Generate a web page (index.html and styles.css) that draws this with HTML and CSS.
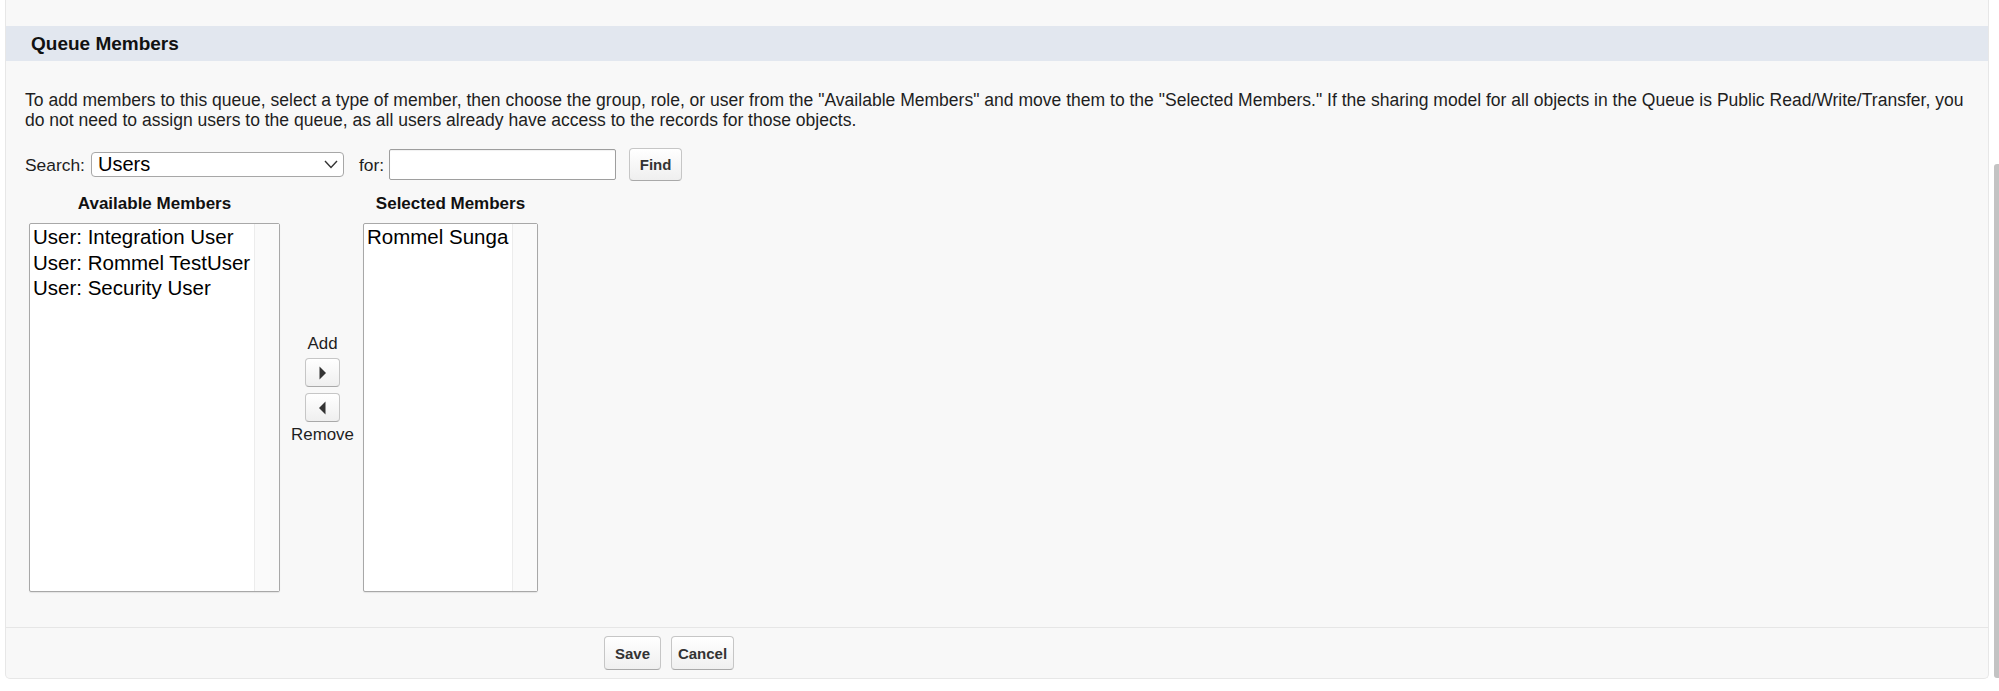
FILE: index.html
```
<!DOCTYPE html>
<html lang="en">
<head>
<meta charset="utf-8">
<title>Queue Members</title>
<link rel="stylesheet" href="styles.css">
</head>
<body>
<div class="panel">
  <div class="top-space"></div>
  <h3 class="subheader">Queue Members</h3>
  <div class="body">
    <p class="intro">To add members to this queue, select a type of member, then choose the group, role, or user from the "Available Members" and move them to the "Selected Members." If the sharing model for all objects in the Queue is Public Read/Write/Transfer, you do not need to assign users to the queue, as all users already have access to the records for those objects.</p>
    <div class="search-row">
      <span class="label">Search:</span>
      <div class="select">
        <span class="select-value">Users</span>
        <svg class="chevron" width="14" height="9" viewBox="0 0 14 9"><polyline points="1,1 7,7.5 13,1" fill="none" stroke="#333" stroke-width="1.4"/></svg>
      </div>
      <span class="label for-label">for:</span>
      <div class="text-input"></div>
      <button class="btn find-btn">Find</button>
    </div>
    <div class="duel">
      <div class="col-head">Available Members</div>
      <div class="col-head-spacer"></div>
      <div class="col-head">Selected Members</div>
      <div class="listbox list-left">
        <div class="options">
          <div class="option">User: Integration User</div>
          <div class="option">User: Rommel TestUser</div>
          <div class="option">User: Security User</div>
        </div>
        <div class="track"></div>
      </div>
      <div class="mover">
        <div class="mover-label">Add</div>
        <button class="btn arrow-btn add-btn"><svg width="9" height="14" viewBox="0 0 9 14"><polygon points="1.5,0.5 8,7 1.5,13.5" fill="#333"/></svg></button>
        <button class="btn arrow-btn remove-btn"><svg width="9" height="14" viewBox="0 0 9 14"><polygon points="7.5,0.5 1,7 7.5,13.5" fill="#333"/></svg></button>
        <div class="mover-label">Remove</div>
      </div>
      <div class="listbox list-right">
        <div class="options">
          <div class="option">Rommel Sunga</div>
        </div>
        <div class="track"></div>
      </div>
    </div>
  </div>
  <div class="footer">
    <button class="btn save-btn">Save</button>
    <button class="btn cancel-btn">Cancel</button>
  </div>
</div>
<div class="scroll-thumb"></div>
</body>
</html>
```
FILE: styles.css
```
* { box-sizing: border-box; }
html, body { margin: 0; padding: 0; }
body {
  background: #ffffff;
  font-family: "Liberation Sans", Arial, Helvetica, sans-serif;
  color: #1e1e1e;
  width: 1999px;
  height: 691px;
  overflow: hidden;
  position: relative;
}
.panel {
  margin-left: 5px;
  width: 1984px;
  background: #f8f8f8;
  border: 1px solid #e7e7e7;
  border-top: none;
  border-radius: 0 0 5px 5px;
}
.top-space { height: 26px; }
.subheader {
  margin: 0;
  height: 35px;
  line-height: 35px;
  background: #e2e7ef;
  padding-left: 25px;
  font-size: 19px;
  font-weight: bold;
  color: #111;
}
.body { padding: 0 12px 35px 19px; }
.intro {
  margin: 29px 0 0 0;
  font-size: 17.55px;
  line-height: 20px;
  color: #1e1e1e;
}
.search-row {
  margin-top: 18px;
  display: flex;
  align-items: center;
  height: 33px;
  font-size: 17.4px;
}
.label { line-height: 20px; }
.select {
  margin-left: 6px;
  width: 253px;
  height: 25px;
  background: #fff;
  border: 1px solid #a7a7a7;
  border-radius: 4px;
  display: flex;
  align-items: center;
  justify-content: space-between;
  padding: 0 5px 0 6px;
}
.select-value { font-size: 20px; color: #000; line-height: 23px; }
.chevron { display: block; }
.for-label { margin-left: 15px; }
.text-input {
  margin-left: 5px;
  width: 227px;
  height: 31px;
  background: #fff;
  border: 1px solid #9e9e9e;
  border-radius: 2px;
  box-shadow: inset 0 1px 1px rgba(0,0,0,0.06);
}
.btn {
  font-family: "Liberation Sans", Arial, Helvetica, sans-serif;
  font-weight: bold;
  font-size: 15px;
  color: #333;
  background: linear-gradient(#ffffff, #efefef);
  border: 1px solid #c6c6c6;
  border-bottom-color: #a9a9a9;
  border-radius: 4px;
  padding: 0;
  margin: 0;
  display: flex;
  align-items: center;
  justify-content: center;
}
.find-btn { margin-left: 13px; width: 53px; height: 33px; }
.duel {
  margin-top: 13px;
  margin-left: 4px;
  display: grid;
  grid-template-columns: 251px 83px 175px;
  grid-template-rows: 20px 369px;
  row-gap: 9px;
}
.col-head {
  text-align: center;
  font-weight: bold;
  font-size: 17px;
  line-height: 20px;
  color: #111;
}
.listbox {
  display: flex;
  background: #fff;
  border: 1px solid #a8a8a8;
  border-radius: 2px;
  box-shadow: 0 1px 1px rgba(0,0,0,0.08);
}
.options { flex: 1; padding-left: 3px; overflow: hidden; }
.option {
  font-size: 20.5px;
  line-height: 25.5px;
  color: #000;
  white-space: nowrap;
}
.track {
  width: 25px;
  background: #fafafa;
  border-left: 1px solid #ececec;
}
.mover {
  display: flex;
  flex-direction: column;
  align-items: center;
  padding-top: 111px;
  padding-left: 2px;
}
.mover-label { font-size: 16.9px; line-height: 20px; color: #1e1e1e; }
.arrow-btn { width: 35px; height: 29px; }
.add-btn { margin-top: 4px; }
.remove-btn { margin-top: 6px; margin-bottom: 3px; }
.arrow-btn svg { display: block; }
.footer {
  border-top: 1px solid #e6e6e6;
  padding: 8px 0 8px 598px;
  display: flex;
  gap: 10px;
}
.save-btn { width: 57px; height: 34px; }
.cancel-btn { width: 63px; height: 34px; }
.scroll-thumb {
  position: absolute;
  top: 164px;
  right: 0;
  width: 5px;
  height: 514px;
  background: #c3c3c3;
  border-radius: 3px 0 0 3px;
}
```
